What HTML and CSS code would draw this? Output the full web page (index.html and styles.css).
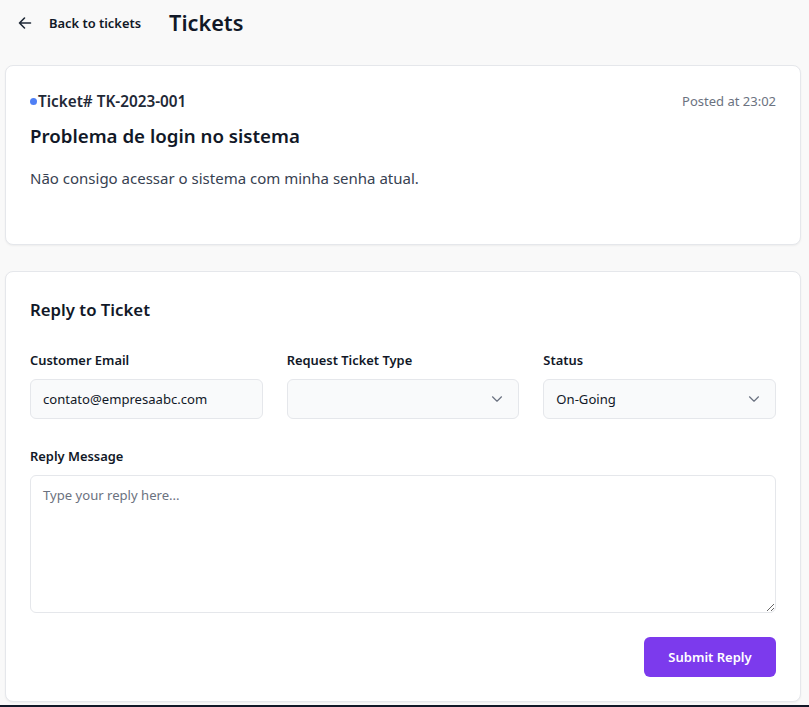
FILE: index.html
```html
<!DOCTYPE html>
<html lang="en">
<head>
<meta charset="utf-8">
<title>Tickets</title>
<link rel="stylesheet" href="styles.css">
</head>
<body>
<div class="page">
  <header class="topbar">
    <a class="back" href="#">
      <svg class="back-icon" width="14" height="14" viewBox="0 0 14 14" fill="none" stroke="#1f2937" stroke-width="1.6" stroke-linecap="round" stroke-linejoin="round"><path d="M12.5 7H1.5M6.5 2L1.5 7l5 5"/></svg>
      <span>Back to tickets</span>
    </a>
    <h1 class="page-title">Tickets</h1>
  </header>

  <section class="card ticket">
    <div class="ticket-head">
      <div class="ticket-id"><span class="dot"></span>Ticket# TK-2023-001</div>
      <div class="posted">Posted at 23:02</div>
    </div>
    <h2 class="ticket-title">Problema de login no sistema</h2>
    <p class="ticket-desc">Não consigo acessar o sistema com minha senha atual.</p>
  </section>

  <section class="card reply">
    <h3 class="reply-title">Reply to Ticket</h3>
    <div class="fields">
      <div class="field">
        <label class="label">Customer Email</label>
        <div class="control">contato@empresaabc.com</div>
      </div>
      <div class="field">
        <label class="label">Request Ticket Type</label>
        <div class="control select">
          <span></span>
          <svg class="chev" width="12" height="8" viewBox="0 0 12 8" fill="none" stroke="#6b7280" stroke-width="1.2" stroke-linecap="round" stroke-linejoin="round"><path d="M1.5 1.8L6 6.2l4.5-4.4"/></svg>
        </div>
      </div>
      <div class="field">
        <label class="label">Status</label>
        <div class="control select">
          <span>On-Going</span>
          <svg class="chev" width="12" height="8" viewBox="0 0 12 8" fill="none" stroke="#6b7280" stroke-width="1.2" stroke-linecap="round" stroke-linejoin="round"><path d="M1.5 1.8L6 6.2l4.5-4.4"/></svg>
        </div>
      </div>
    </div>
    <label class="label msg-label">Reply Message</label>
    <textarea class="textarea" placeholder="Type your reply here..."></textarea>
    <div class="actions">
      <button class="submit" type="button">Submit Reply</button>
    </div>
  </section>
</div>
</body>
</html>
```

FILE: styles.css
```css
* { box-sizing: border-box; }
html, body { margin: 0; padding: 0; }
body {
  background: #111827;
  font-family: "Noto Sans", "Open Sans", sans-serif;
  color: #111827;
}
.page {
  background: #f9f9f9;
  padding: 0 8px 3px 5px;
  min-height: 704px;
}
.topbar {
  height: 45px;
  display: flex;
  align-items: center;
  padding-left: 13px;
  gap: 28px;
}
.back {
  display: flex;
  align-items: center;
  gap: 17px;
  text-decoration: none;
  color: #111827;
  font-size: 12.9px;
  font-weight: 600;
}
.back-icon { display: block; }
.page-title {
  margin: 0;
  font-size: 21.7px;
  font-weight: 600;
  line-height: 32px;
}
.card {
  background: #fff;
  border: 1px solid #e5e7eb;
  border-radius: 8px;
  box-shadow: 0 1px 2px rgba(0,0,0,0.05);
  padding: 24px 24px;
}
.ticket {
  margin-top: 20px;
  height: 180px;
  padding-top: 23px;
}
.ticket-head {
  display: flex;
  justify-content: space-between;
  align-items: center;
  height: 24px;
}
.ticket-id {
  display: flex;
  align-items: center;
  gap: 1px;
  font-size: 15.3px;
  font-weight: 600;
  color: #1f2937;
}
.dot {
  width: 7px;
  height: 7px;
  border-radius: 50%;
  background: #4f7ff5;
}
.posted {
  font-size: 13px;
  color: #6b7280;
}
.ticket-title {
  margin: 9px 0 0;
  font-size: 18.7px;
  font-weight: 600;
  line-height: 28px;
}
.ticket-desc {
  margin: 16px 0 0;
  font-size: 15px;
  line-height: 24px;
  color: #374151;
}
.reply { margin-top: 26px; }
.reply-title {
  margin: 0;
  font-size: 16.75px;
  font-weight: 600;
  line-height: 28px;
}
.fields {
  margin-top: 26px;
  display: grid;
  grid-template-columns: 1fr 1fr 1fr;
  gap: 24px;
}
.field { display: flex; flex-direction: column; }
.label {
  display: block;
  font-size: 12.9px;
  font-weight: 600;
  line-height: 20px;
  margin-bottom: 9px;
  color: #111827;
}
.control {
  height: 40px;
  display: flex;
  align-items: center;
  padding: 0 12px;
  background: #f9fafb;
  border: 1px solid #e5e7eb;
  border-radius: 6px;
  font-size: 13.1px;
  color: #111827;
}
.select { justify-content: space-between; padding-right: 15px; }
.chev { display: block; }
.msg-label { margin-top: 27px; }
.textarea {
  display: block;
  width: 100%;
  height: 138px;
  border: 1px solid #e5e7eb;
  border-radius: 6px;
  padding: 10px 12px;
  font-family: inherit;
  font-size: 13.1px;
  color: #111827;
  resize: vertical;
  background: #fff;
}
.textarea::placeholder { color: #6b7280; }
.actions {
  display: flex;
  justify-content: flex-end;
  margin-top: 24px;
}
.submit {
  height: 40px;
  width: 132px;
  border: none;
  border-radius: 6px;
  background: #7c3aed;
  color: #fff;
  font-family: inherit;
  font-size: 13px;
  font-weight: 600;
}
```
